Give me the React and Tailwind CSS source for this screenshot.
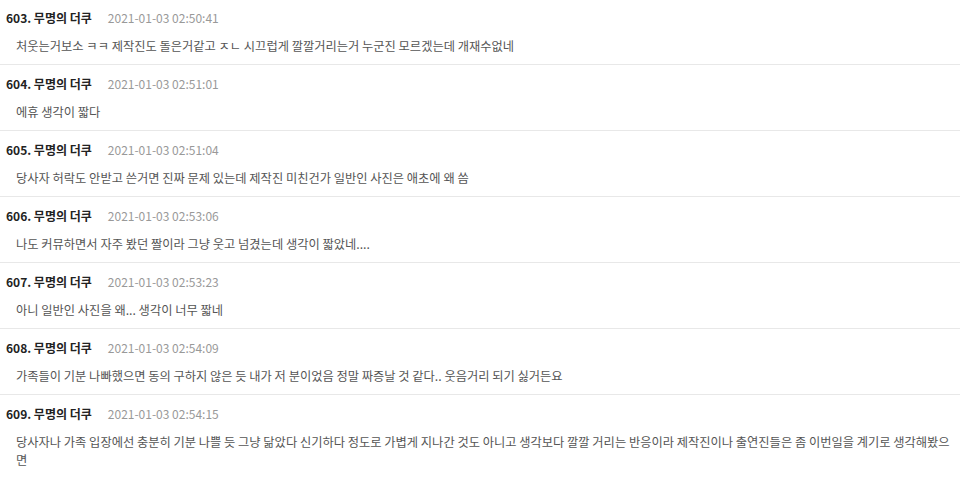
const comments = [
  { no: 603, date: "2021-01-03 02:50:41", text: "처웃는거보소 ㅋㅋ 제작진도 돌은거같고 ㅈㄴ 시끄럽게 깔깔거리는거 누군진 모르겠는데 개재수없네" },
  { no: 604, date: "2021-01-03 02:51:01", text: "에휴 생각이 짧다" },
  { no: 605, date: "2021-01-03 02:51:04", text: "당사자 허락도 안받고 쓴거면 진짜 문제 있는데 제작진 미친건가 일반인 사진은 애초에 왜 씀" },
  { no: 606, date: "2021-01-03 02:53:06", text: "나도 커뮤하면서 자주 봤던 짤이라 그냥 웃고 넘겼는데 생각이 짧았네...." },
  { no: 607, date: "2021-01-03 02:53:23", text: "아니 일반인 사진을 왜... 생각이 너무 짧네" },
  { no: 608, date: "2021-01-03 02:54:09", text: "가족들이 기분 나빠했으면 동의 구하지 않은 듯 내가 저 분이었음 정말 짜증날 것 같다.. 웃음거리 되기 싫거든요" },
  { no: 609, date: "2021-01-03 02:54:15", text: "당사자나 가족 입장에선 충분히 기분 나쁠 듯 그냥 닮았다 신기하다 정도로 가볍게 지나간 것도 아니고 생각보다 깔깔 거리는 반응이라 제작진이나 출연진들은 좀 이번일을 계기로 생각해봤으면" },
];

export default function App() {
  return (
    <div className="w-[960px] h-[479px] overflow-hidden bg-white" style={{ fontFamily: '"Noto Sans CJK KR", "Noto Sans", sans-serif' }}>
      {comments.map((c, i) => (
        <div
          key={c.no}
          className={`pr-[5px] pb-[9px] ${i === 0 ? "pt-[9px]" : "pt-[10px]"} ${i === comments.length - 1 ? "" : "border-b border-[#e8e8e8]"}`}
        >
          <div className="flex items-center h-[18px] pl-[6px]">
            <span className="text-[12px] font-bold text-[#222] leading-[18px]">{c.no}. 무명의 더쿠</span>
            <span className="ml-[16px] text-[12px] text-[#999] leading-[18px]">{c.date}</span>
          </div>
          <div className="mt-[10px] pl-[16px] text-[12.25px] leading-[18px] text-[#555]">{c.text}</div>
        </div>
      ))}
    </div>
  );
}
